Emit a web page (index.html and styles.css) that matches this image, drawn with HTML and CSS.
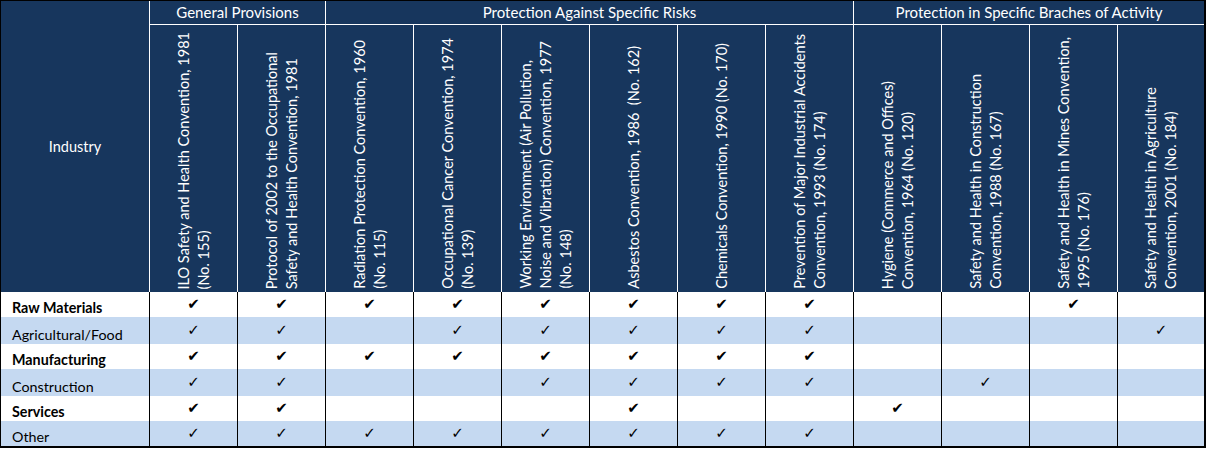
FILE: index.html
```html
<!DOCTYPE html>
<html lang="en">
<head>
<meta charset="utf-8">
<title>ILO Conventions by Industry</title>
<link rel="stylesheet" href="styles.css">
</head>
<body>
<div class="sheet">
  <div class="hd industry">Industry</div>
  <div class="hd group g1">General Provisions</div>
  <div class="hd group g2">Protection Against Specific Risks</div>
  <div class="hd group g3 last">Protection in Specific Braches of Activity</div>

  <div class="hd conv"><div class="vt">ILO Safety and Health Convention, 1981<br>(No. 155)</div></div>
  <div class="hd conv"><div class="vt">Protocol of 2002 to the Occupational<br>Safety and Health Convention, 1981</div></div>
  <div class="hd conv"><div class="vt">Radiation Protection Convention, 1960<br>(No. 115)</div></div>
  <div class="hd conv"><div class="vt">Occupational Cancer Convention, 1974<br>(No. 139)</div></div>
  <div class="hd conv"><div class="vt">Working Environment (Air Pollution,<br>Noise and Vibration) Convention, 1977<br>(No. 148)</div></div>
  <div class="hd conv"><div class="vt">Asbestos Convention, 1986&nbsp; (No. 162)</div></div>
  <div class="hd conv"><div class="vt">Chemicals Convention, 1990 (No. 170)</div></div>
  <div class="hd conv"><div class="vt">Prevention of Major Industrial Accidents<br>Convention, 1993 (No. 174)</div></div>
  <div class="hd conv"><div class="vt">Hygiene (Commerce and Offices)<br>Convention, 1964 (No. 120)</div></div>
  <div class="hd conv"><div class="vt">Safety and Health in Construction<br>Convention, 1988 (No. 167)</div></div>
  <div class="hd conv"><div class="vt">Safety and Health in Mines Convention,<br>1995 (No. 176)</div></div>
  <div class="hd conv last"><div class="vt">Safety and Health in Agriculture<br>Convention, 2001 (No. 184)</div></div>

  <!-- Raw Materials -->
  <div class="c name strong">Raw Materials</div>
  <div class="c chk strong">✔</div><div class="c chk strong">✔</div><div class="c chk strong">✔</div><div class="c chk strong">✔</div>
  <div class="c chk strong">✔</div><div class="c chk strong">✔</div><div class="c chk strong">✔</div><div class="c chk strong">✔</div>
  <div class="c chk strong"></div><div class="c chk strong"></div><div class="c chk strong">✔</div><div class="c chk strong last"></div>

  <!-- Agricultural/Food -->
  <div class="c name alt">Agricultural/Food</div>
  <div class="c chk alt">✓</div><div class="c chk alt">✓</div><div class="c chk alt"></div><div class="c chk alt">✓</div>
  <div class="c chk alt">✓</div><div class="c chk alt">✓</div><div class="c chk alt">✓</div><div class="c chk alt">✓</div>
  <div class="c chk alt"></div><div class="c chk alt"></div><div class="c chk alt"></div><div class="c chk alt last">✓</div>

  <!-- Manufacturing -->
  <div class="c name strong">Manufacturing</div>
  <div class="c chk strong">✔</div><div class="c chk strong">✔</div><div class="c chk strong">✔</div><div class="c chk strong">✔</div>
  <div class="c chk strong">✔</div><div class="c chk strong">✔</div><div class="c chk strong">✔</div><div class="c chk strong">✔</div>
  <div class="c chk strong"></div><div class="c chk strong"></div><div class="c chk strong"></div><div class="c chk strong last"></div>

  <!-- Construction -->
  <div class="c name alt">Construction</div>
  <div class="c chk alt">✓</div><div class="c chk alt">✓</div><div class="c chk alt"></div><div class="c chk alt"></div>
  <div class="c chk alt">✓</div><div class="c chk alt">✓</div><div class="c chk alt">✓</div><div class="c chk alt">✓</div>
  <div class="c chk alt"></div><div class="c chk alt">✓</div><div class="c chk alt"></div><div class="c chk alt last"></div>

  <!-- Services -->
  <div class="c name strong">Services</div>
  <div class="c chk strong">✔</div><div class="c chk strong">✔</div><div class="c chk strong"></div><div class="c chk strong"></div>
  <div class="c chk strong"></div><div class="c chk strong">✔</div><div class="c chk strong"></div><div class="c chk strong"></div>
  <div class="c chk strong">✔</div><div class="c chk strong"></div><div class="c chk strong"></div><div class="c chk strong last"></div>

  <!-- Other -->
  <div class="c name alt">Other</div>
  <div class="c chk alt">✓</div><div class="c chk alt">✓</div><div class="c chk alt">✓</div><div class="c chk alt">✓</div>
  <div class="c chk alt">✓</div><div class="c chk alt">✓</div><div class="c chk alt">✓</div><div class="c chk alt">✓</div>
  <div class="c chk alt"></div><div class="c chk alt"></div><div class="c chk alt"></div><div class="c chk alt last"></div>
</div>
</body>
</html>
```

FILE: styles.css
```css
html, body {
  margin: 0;
  padding: 0;
  background: #ffffff;
}

* {
  box-sizing: border-box;
}

.sheet {
  display: grid;
  width: 1206px;
  grid-template-columns: 149px repeat(11, 88px) 86px;
  grid-template-rows: 24px 267px 25px 27px 25px 27px 25px 25px;
  border-left: 1px solid #000;
  border-top: 1px solid #000;
  border-right: 2px solid #000;
  border-bottom: 2px solid #000;
  font-family: "Lato", "Liberation Sans", sans-serif;
  font-size: 14px;
  color: #000;
}

.hd {
  background: #17365d;
  color: #ffffff;
  border-right: 1px solid #ffffff;
  font-size: 15px;
}

.hd.last {
  border-right: none;
}

.industry {
  grid-row: 1 / span 2;
  grid-column: 1;
  display: flex;
  align-items: center;
  justify-content: center;
  font-size: 14.5px;
}

.group {
  display: flex;
  align-items: center;
  justify-content: center;
  border-bottom: 1px solid #ffffff;
  white-space: nowrap;
  padding-bottom: 1px;
}

.g1 { grid-column: 2 / span 2; }
.g2 { grid-column: 4 / span 6; }
.g3 { grid-column: 10 / span 4; }

.conv {
  display: flex;
  align-items: flex-end;
  justify-content: center;
  padding-bottom: 3px;
  font-size: 14.5px;
}

.vt {
  writing-mode: vertical-rl;
  transform: rotate(180deg);
  white-space: nowrap;
  line-height: 20px;
  text-align: start;
}

.c {
  border-right: 1px solid #000;
  background: #ffffff;
}

.c.last {
  border-right: none;
}

.alt {
  background: #c5d9f1;
}

.name {
  display: flex;
  align-items: flex-end;
  padding-left: 11px;
  padding-bottom: 1px;
  line-height: 16px;
  white-space: nowrap;
  font-size: 14.3px;
}

.name.strong {
  font-weight: 700;
}

.chk {
  display: flex;
  align-items: center;
  justify-content: center;
  font-family: "DejaVu Sans", sans-serif;
  line-height: 1;
}

.chk.strong {
  font-size: 15px;
}

.chk.alt {
  font-size: 15px;
}
```
